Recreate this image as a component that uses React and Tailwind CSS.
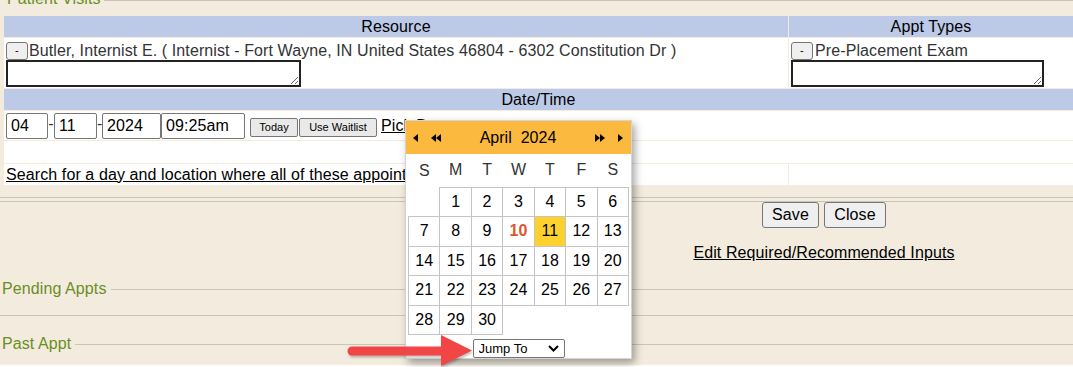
import { useState } from "react";

const weeks = [
  [null, 1, 2, 3, 4, 5, 6],
  [7, 8, 9, 10, 11, 12, 13],
  [14, 15, 16, 17, 18, 19, 20],
  [21, 22, 23, 24, 25, 26, 27],
  [28, 29, 30, null, null, null, null],
];

const dayNames = ["S", "M", "T", "W", "T", "F", "S"];

function Tri({ dir = "left" }) {
  return (
    <svg width="5" height="8" viewBox="0 0 5 8" className="block">
      {dir === "left" ? (
        <polygon points="5,0 5,8 0,4" fill="#000" />
      ) : (
        <polygon points="0,0 0,8 5,4" fill="#000" />
      )}
    </svg>
  );
}

function MinusButton() {
  return (
    <button className="flex h-[18px] w-[22px] items-start justify-center rounded-[3px] border border-[#767676] bg-[#efefef] text-[11px] leading-[14px] text-black">
      -
    </button>
  );
}

function Calendar() {
  const [selected, setSelected] = useState(11);

  return (
    <div className="absolute left-[405px] top-[120px] h-[239px] w-[227px] border border-[#d4d4d4] bg-white tracking-normal shadow-[3px_4px_8px_rgba(0,0,0,0.35)]">
      {/* month header */}
      <div className="flex h-[33px] items-center bg-[#fbb940] pl-[7px] pr-[8px]">
        <Tri dir="left" />
        <div className="ml-[13px] flex">
          <Tri dir="left" />
          <Tri dir="left" />
        </div>
        <div className="flex flex-1 justify-center gap-[9px] text-black">
          <span>April</span>
          <span>2024</span>
        </div>
        <div className="mr-[13px] flex">
          <Tri dir="right" />
          <Tri dir="right" />
        </div>
        <Tri dir="right" />
      </div>

      <table className="ml-[2px] w-[221px] table-fixed border-collapse">
        <thead>
          <tr className="h-[33px]">
            {dayNames.map((d, i) => (
              <th key={i} className="p-0 text-center font-normal text-[#333]">
                {d}
              </th>
            ))}
          </tr>
        </thead>
        <tbody>
          {weeks.map((week, wi) => (
            <tr key={wi} className="h-[29.5px]">
              {week.map((day, di) =>
                day ? (
                  <td
                    key={di}
                    onClick={() => setSelected(day)}
                    className={`border border-[#c4c4c4] p-0 text-center ${
                      day === selected ? "bg-[#fdd22e]" : ""
                    } ${day === 10 ? "font-bold text-[#df5530]" : "text-black"}`}
                  >
                    {day}
                  </td>
                ) : (
                  <td key={di} className="p-0" />
                )
              )}
            </tr>
          ))}
        </tbody>
      </table>

      {/* jump to */}
      <div className="mt-[4px] flex justify-center">
        <div className="relative h-[19px] w-[92px]">
          <select className="h-[19px] w-[92px] appearance-none rounded-[2px] border border-[#767676] bg-white pl-[5px] text-[13px] leading-[15px] text-black">
            <option>Jump To</option>
          </select>
          <svg
            width="11"
            height="7"
            viewBox="0 0 11 7"
            className="pointer-events-none absolute right-[6px] top-[6px]"
          >
            <polyline points="1,1 5.5,5.5 10,1" fill="none" stroke="#000" strokeWidth="2" />
          </svg>
        </div>
      </div>
    </div>
  );
}

export default function App() {
  return (
    <div className="h-[367px] w-[1073px] overflow-hidden bg-white font-['Liberation_Sans',Arial,sans-serif] text-[16px] leading-[18px] tracking-[0.1px]">
      <div className="relative h-[365px] bg-[#f3ecde]">
        {/* Patient Visits legend */}
        <div className="flex h-[16px] items-start">
          <span className="-mt-[10px] ml-[7px] pr-[3px] text-[#6b8e23]">Patient Visits</span>
          <div className="h-px flex-1 bg-[#c9c5bd]" />
        </div>

        {/* visit table */}
        <div className="ml-[4px] flex w-[1069px] flex-col gap-px">
          <div className="flex h-[21px] gap-px">
            <div className="flex w-[784px] items-center justify-center bg-[#bccae8] text-black">Resource</div>
            <div className="flex flex-1 items-center justify-center bg-[#bccae8] text-black">Appt Types</div>
          </div>

          <div className="flex h-[50px] gap-px">
            <div className="flex w-[784px] flex-col bg-white pl-[2px] pt-[4px]">
              <div className="flex h-[18px] items-center">
                <MinusButton />
                <span className="ml-[1px] text-[#333]">
                  Butler, Internist E. ( Internist - Fort Wayne, IN United States 46804 - 6302 Constitution Dr )
                </span>
              </div>
              <textarea className="h-[27px] w-[295px] resize border-2 border-[#222] bg-white" />
            </div>
            <div className="flex flex-1 flex-col bg-white pl-[2px] pt-[4px]">
              <div className="flex h-[18px] items-center">
                <MinusButton />
                <span className="ml-[2px] text-[#333]">Pre-Placement Exam</span>
              </div>
              <textarea className="h-[27px] w-[253px] resize border-2 border-[#222] bg-white" />
            </div>
          </div>

          <div className="flex h-[21px] items-center justify-center bg-[#bccae8] text-black">Date/Time</div>

          <div className="flex h-[29px] items-start bg-white pl-[2px] pt-[2px]">
            <input
              defaultValue="04"
              className="h-[26px] w-[42px] rounded-[2px] border border-[#767676] bg-white px-[4px] text-black"
            />
            <span className="w-[6px] text-center leading-[22px] text-[#333]">-</span>
            <input
              defaultValue="11"
              className="h-[26px] w-[43px] rounded-[2px] border border-[#767676] bg-white px-[4px] text-black"
            />
            <span className="w-[5px] text-center leading-[22px] text-[#333]">-</span>
            <input
              defaultValue="2024"
              className="h-[26px] w-[59px] rounded-[2px] border border-[#767676] bg-white px-[4px] text-black"
            />
            <input
              defaultValue="09:25am"
              className="h-[26px] w-[84px] rounded-[2px] border border-[#767676] bg-white px-[4px] text-black"
            />
            <button className="ml-[5px] mt-[5px] h-[19px] w-[48px] rounded-[2px] border border-[#767676] bg-[#e9e9e9] text-[11px] leading-[13px] tracking-normal text-black">
              Today
            </button>
            <button className="ml-[1px] mt-[5px] h-[19px] w-[78px] rounded-[2px] border border-[#767676] bg-[#e9e9e9] text-[11px] leading-[13px] tracking-normal text-black">
              Use Waitlist
            </button>
            <a href="#" className="ml-[4px] mt-[4px] text-black underline">
              Pick Date
            </a>
          </div>

          <div className="h-[22px] bg-white" />

          <div className="flex h-[21px] gap-px">
            <div className="flex w-[784px] items-center overflow-hidden bg-white pl-[2px]">
              <a href="#" className="whitespace-nowrap text-black underline">
                Search for a day and location where all of these appointments can be scheduled
              </a>
            </div>
            <div className="flex-1 bg-white" />
          </div>
        </div>

        {/* form footer */}
        <div className="mt-[12px] h-px bg-[#c9c5bd]" />
        <div className="mt-[3px] h-px bg-[#c9c5bd]" />
        <div className="ml-[575px] flex flex-col items-center">
          <div className="flex gap-[5px]">
            <button className="h-[26px] w-[57px] rounded-[3px] border border-[#767676] bg-[#efefef] text-black">Save</button>
            <button className="h-[26px] w-[62px] rounded-[3px] border border-[#767676] bg-[#efefef] text-black">Close</button>
          </div>
          <a href="#" className="mt-[16px] text-black underline">
            Edit Required/Recommended Inputs
          </a>
        </div>

        {/* other sections */}
        <div className="mt-[18px] flex h-[18px] items-center">
          <span className="ml-[2px] pr-[4px] text-[#6b8e23]">Pending Appts</span>
          <div className="h-px flex-1 bg-[#c9c5bd]" />
        </div>
        <div className="mt-[17px] h-px bg-[#c9c5bd]" />
        <div className="mt-[19px] flex h-[18px] items-start">
          <span className="ml-[2px] pr-[4px] text-[#6b8e23]">Past Appt</span>
          <div className="mt-[9px] h-px flex-1 bg-[#c9c5bd]" />
        </div>

        <Calendar />

        {/* annotation arrow */}
        <svg
          width="130"
          height="40"
          viewBox="345 330 130 40"
          className="absolute left-[345px] top-[330px] drop-shadow-[1px_2px_1px_rgba(0,0,0,0.25)]"
        >
          <line x1="352" y1="351" x2="446" y2="351" stroke="#f24646" strokeWidth="9" strokeLinecap="round" />
          <polygon points="441,335 472,350.5 441,366" fill="#f24646" />
        </svg>
      </div>
    </div>
  );
}
